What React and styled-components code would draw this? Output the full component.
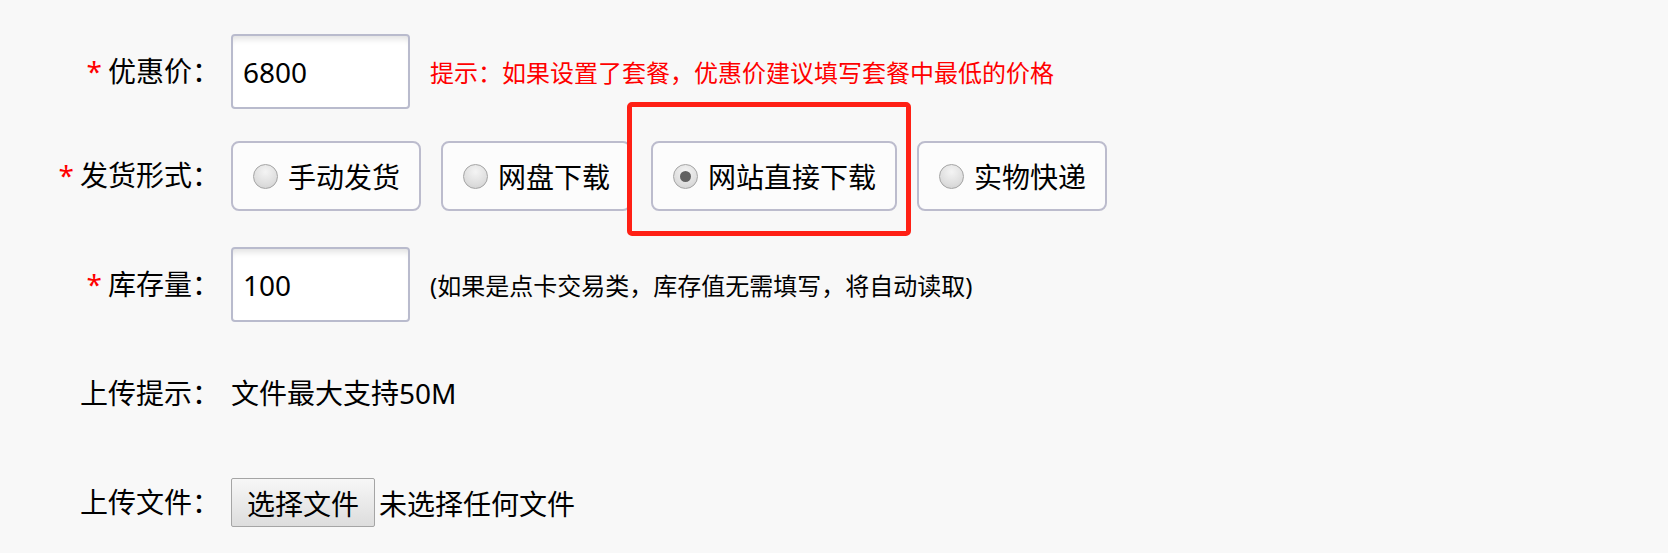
import React from 'react';
import styled, { createGlobalStyle } from 'styled-components';

const GlobalStyle = createGlobalStyle`
  html, body {
    margin: 0;
    padding: 0;
    background: #f8f8f8;
  }
  body {
    font-family: "Noto Sans", "Noto Sans CJK SC", sans-serif;
    color: #000;
  }
`;

const Form = styled.form`
  padding-top: 34px;
  display: flex;
  flex-direction: column;
`;

const Row = styled.div`
  display: flex;
  align-items: center;
  min-height: ${(p) => p.$height || 75}px;
  margin-top: ${(p) => (p.$gap === undefined ? 34 : p.$gap)}px;
`;

const Label = styled.label`
  width: 220px;
  flex-shrink: 0;
  text-align: right;
  font-size: 28px;
  line-height: 1.2;
  margin-right: 11px;
  white-space: nowrap;
`;

const Star = styled.span`
  color: #f00;
  margin-right: 6px;
`;

const TextInput = styled.input`
  box-sizing: border-box;
  width: 179px;
  height: 75px;
  border: 2px solid #b9bbcd;
  border-radius: 4px;
  background: #fff;
  box-shadow: inset 0 7px 6px -4px rgba(0, 0, 0, 0.12);
  padding: 0 10px;
  font-family: "Noto Sans", "Noto Sans CJK SC", sans-serif;
  font-size: 28px;
  color: #000;
  outline: none;
`;

const Hint = styled.span`
  margin-left: 20px;
  font-size: 24px;
  color: ${(p) => (p.$warn ? '#ff0000' : '#000')};
  white-space: nowrap;
`;

const Options = styled.div`
  display: flex;
  gap: 20px;
`;

const Option = styled.label`
  position: relative;
  box-sizing: border-box;
  height: 70px;
  display: flex;
  align-items: center;
  padding: 0 19px 0 20px;
  border: 2px solid #bcbccd;
  border-radius: 8px;
  background: #fcfcfc;
  font-size: 28px;
  white-space: nowrap;
`;

const Radio = styled.input.attrs({ type: 'radio' })`
  appearance: none;
  width: 25px;
  height: 25px;
  margin: 0 10px 0 0;
  border-radius: 50%;
  border: 1px solid #a4a4a4;
  background: radial-gradient(circle at 50% 30%, #f4f4f4 0%, #dddddd 65%, #cccccc 100%);
  box-sizing: border-box;
  display: grid;
  place-items: center;
  &:checked::after {
    content: '';
    width: 11px;
    height: 11px;
    border-radius: 50%;
    background: #626262;
  }
`;

const Highlight = styled.span`
  position: absolute;
  top: -41px;
  bottom: -27px;
  left: -26px;
  right: -16px;
  border: 5px solid #ff2015;
  border-radius: 5px;
  pointer-events: none;
`;

const Plain = styled.span`
  font-size: 28px;
  line-height: 1.2;
`;

const FileButton = styled.button`
  box-sizing: border-box;
  height: 49px;
  padding: 0 15px;
  border: 1px solid #a5a5a5;
  border-radius: 2px;
  background: linear-gradient(#f7f7f7, #dddddd);
  font-family: "Noto Sans", "Noto Sans CJK SC", sans-serif;
  font-size: 28px;
  color: #000;
`;

const FileName = styled.span`
  margin-left: 4px;
  font-size: 28px;
`;

const deliveryTypes = [
  { id: 'manual', text: '手动发货' },
  { id: 'disk', text: '网盘下载' },
  { id: 'site', text: '网站直接下载', checked: true },
  { id: 'express', text: '实物快递' },
];

export default function App() {
  return (
    <>
      <GlobalStyle />
      <Form onSubmit={(e) => e.preventDefault()}>
        <Row $gap={0}>
          <Label>
            <Star>*</Star>优惠价：
          </Label>
          <TextInput defaultValue="6800" />
          <Hint $warn>提示：如果设置了套餐，优惠价建议填写套餐中最低的价格</Hint>
        </Row>
        <Row $height={70} $gap={32}>
          <Label>
            <Star>*</Star>发货形式：
          </Label>
          <Options>
            {deliveryTypes.map((t) => (
              <Option key={t.id}>
                <Radio name="delivery" defaultChecked={t.checked} />
                {t.text}
                {t.checked && <Highlight />}
              </Option>
            ))}
          </Options>
        </Row>
        <Row $gap={36}>
          <Label>
            <Star>*</Star>库存量：
          </Label>
          <TextInput defaultValue="100" />
          <Hint>(如果是点卡交易类，库存值无需填写，将自动读取)</Hint>
        </Row>
        <Row>
          <Label>上传提示：</Label>
          <Plain>文件最大支持50M</Plain>
        </Row>
        <Row>
          <Label>上传文件：</Label>
          <FileButton type="button">选择文件</FileButton>
          <FileName>未选择任何文件</FileName>
        </Row>
      </Form>
    </>
  );
}
